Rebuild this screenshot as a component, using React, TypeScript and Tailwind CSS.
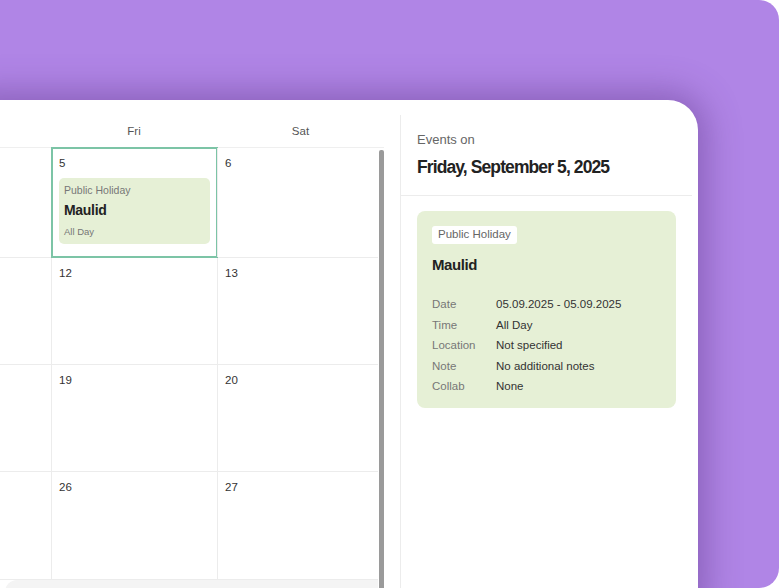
import React from "react";

const weeks = [
  ["", "5", "6"],
  ["", "12", "13"],
  ["", "19", "20"],
  ["", "26", "27"],
];

const rowHeights = ["h-[110px]", "h-[107px]", "h-[107px]", "h-[108px]"];

const details = [
  ["Date", "05.09.2025 - 05.09.2025"],
  ["Time", "All Day"],
  ["Location", "Not specified"],
  ["Note", "No additional notes"],
  ["Collab", "None"],
];

function DayCell({ day, selected, first }: { day: string; selected?: boolean; first?: boolean }) {
  return (
    <div className={`relative h-full px-[7px] pt-[7px] ${first ? "" : "border-l border-[#ececec]"}`}>
      {selected && (
        <div className="absolute -left-px -top-px -bottom-px -right-px border-2 border-[#7cc4a6] pointer-events-none" />
      )}
      {day && <div className="text-[11.5px] leading-[16px] text-[#333]">{day}</div>}
      {selected && (
        <div className="mt-[7px] rounded-[5px] bg-[#e6f0d6] px-[5px] pt-[5px] pb-[5px]">
          <div className="text-[10.5px] leading-[14px] text-[#777]">Public Holiday</div>
          <div className="mt-[4px] text-[14px] leading-[18px] font-bold tracking-[-0.3px] text-[#222]">Maulid</div>
          <div className="mt-[6px] text-[9.5px] leading-[14px] text-[#777]">All Day</div>
        </div>
      )}
    </div>
  );
}

function Calendar() {
  return (
    <div className="flex w-[424px] shrink-0 flex-col">
      <div className="grid h-[48px] grid-cols-[91px_166px_167px] border-b border-[#efefef] pt-[23px] text-[11.5px] leading-[16px] text-[#555]">
        <div />
        <div className="text-center">Fri</div>
        <div className="text-center">Sat</div>
      </div>
      <div className="flex">
        <div className="w-[418px]">
          {weeks.map((w, i) => (
            <div key={i} className={`grid grid-cols-[91px_166px_161px] border-b border-[#ececec] ${rowHeights[i]}`}>
              <DayCell day={w[0]} first />
              <DayCell day={w[1]} selected={i === 0} />
              <DayCell day={w[2]} />
            </div>
          ))}
          <div className="ml-[45px] h-[40px] rounded-tl-[12px] bg-[#f4f4f4]" />
        </div>
        <div className="ml-px mt-[2px] w-[5px] rounded-t-[2px] bg-[#9a9a9a]" />
      </div>
    </div>
  );
}

function Sidebar() {
  return (
    <div className="ml-[16px] mt-[15px] flex w-[292px] shrink-0 flex-col border-l border-[#ececec]">
      <div className="border-b border-[#ececec] pl-[16px] pt-[16px] pb-[16px]">
        <div className="text-[13px] leading-[18px] text-[#666]">Events on</div>
        <div className="mt-[6px] text-[17.5px] leading-[24px] font-bold tracking-[-0.9px] text-[#222]">
          Friday, September 5, 2025
        </div>
      </div>
      <div className="mx-[16px] mt-[15px] rounded-[8px] bg-[#e6f0d6] px-[15px] pt-[15px] pb-[11px]">
        <div className="flex h-[18px] w-fit items-center rounded-[3px] bg-white px-[6px] text-[11.5px] text-[#666]">
          Public Holiday
        </div>
        <div className="mt-[11px] text-[15px] leading-[20px] font-bold tracking-[-0.4px] text-[#222]">Maulid</div>
        <div className="mt-[19px]">
          {details.map(([k, v]) => (
            <div key={k} className="flex text-[11.5px] leading-[20.5px]">
              <div className="w-[64px] text-[#777]">{k}</div>
              <div className="text-[#333]">{v}</div>
            </div>
          ))}
        </div>
      </div>
    </div>
  );
}

export default function App() {
  return (
    <div className="h-[588px] w-[779px] overflow-hidden bg-white font-['Liberation_Sans',Arial,sans-serif]">
      <div className="-ml-[40px] h-[588px] w-[819px] overflow-hidden rounded-[20px] bg-[#b085e6] pt-[100px]">
        <div className="flex h-[520px] w-[738px] rounded-[30px] bg-white shadow-[0_0_34px_8px_rgba(90,50,130,0.45)]">
          <Calendar />
          <Sidebar />
        </div>
      </div>
    </div>
  );
}
